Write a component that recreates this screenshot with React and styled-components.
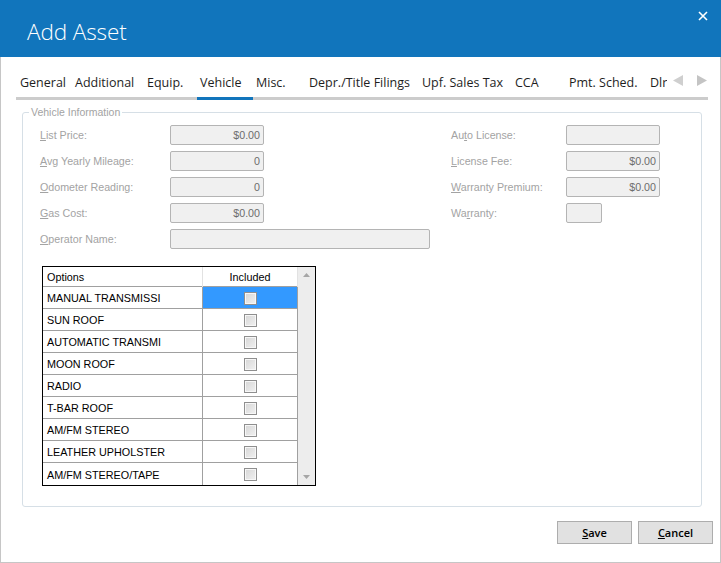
import React from 'react'
import styled, { createGlobalStyle } from 'styled-components'

const GlobalStyle = createGlobalStyle`
    html, body {
        margin: 0;
        padding: 0;
        background: #fff;
    }

    * {
        box-sizing: border-box;
    }
`

const tabs = [
    { label: 'General', width: 55 },
    { label: 'Additional', width: 72 },
    { label: 'Equip.', width: 53 },
    { label: 'Vehicle', width: 56, active: true },
    { label: 'Misc.', width: 53 },
    { label: 'Depr./Title Filings', width: 113 },
    { label: 'Upf. Sales Tax', width: 93 },
    { label: 'CCA', width: 54 },
    { label: 'Pmt. Sched.', width: 81 },
    { label: 'Dlr', width: 20 },
]

const options = [
    'MANUAL TRANSMISSI',
    'SUN ROOF',
    'AUTOMATIC TRANSMI',
    'MOON ROOF',
    'RADIO',
    'T-BAR ROOF',
    'AM/FM STEREO',
    'LEATHER UPHOLSTER',
    'AM/FM STEREO/TAPE',
]

// label text with the access key letter underlined
const Key = ({ text, at = 0 }) => (
    <>
        {text.slice(0, at)}
        <u>{text[at]}</u>
        {text.slice(at + 1)}
    </>
)

const AddAsset = () => {
    return (
        <Window>
            <Header>
                <Title>Add Asset</Title>
                <CloseButton aria-label="Close">
                    <svg width="10" height="10" viewBox="0 0 10 10">
                        <path d="M1 1 L9 9 M9 1 L1 9" stroke="#fff" strokeWidth="1.6" />
                    </svg>
                </CloseButton>
            </Header>

            <Body>
                <TabBar>
                    <TabList>
                        {tabs.map((tab) => (
                            <Tab key={tab.label} $width={tab.width} $active={tab.active}>
                                {tab.label}
                            </Tab>
                        ))}
                    </TabList>
                    <TabArrows>
                        <svg width="10" height="11" viewBox="0 0 10 11">
                            <path d="M10 0 L10 11 L0 5.5 Z" fill="#cfcfcf" />
                        </svg>
                        <svg width="10" height="11" viewBox="0 0 10 11">
                            <path d="M0 0 L0 11 L10 5.5 Z" fill="#c4c4c4" />
                        </svg>
                    </TabArrows>
                </TabBar>

                <Group>
                    <Legend>Vehicle Information</Legend>
                    <GroupBody>
                        <FieldColumns>
                            <FieldColumn $width={411}>
                                <FieldRow>
                                    <Label $width={130}><Key text="List Price:" /></Label>
                                    <Input $width={94}>$0.00</Input>
                                </FieldRow>
                                <FieldRow>
                                    <Label $width={130}><Key text="Avg Yearly Mileage:" /></Label>
                                    <Input $width={94}>0</Input>
                                </FieldRow>
                                <FieldRow>
                                    <Label $width={130}><Key text="Odometer Reading:" /></Label>
                                    <Input $width={94}>0</Input>
                                </FieldRow>
                                <FieldRow>
                                    <Label $width={130}><Key text="Gas Cost:" /></Label>
                                    <Input $width={94}>$0.00</Input>
                                </FieldRow>
                                <FieldRow>
                                    <Label $width={130}><Key text="Operator Name:" /></Label>
                                    <Input $width={260} />
                                </FieldRow>
                            </FieldColumn>
                            <FieldColumn>
                                <FieldRow>
                                    <Label $width={115}><Key text="Auto License:" at={2} /></Label>
                                    <Input $width={94} />
                                </FieldRow>
                                <FieldRow>
                                    <Label $width={115}><Key text="License Fee:" /></Label>
                                    <Input $width={94}>$0.00</Input>
                                </FieldRow>
                                <FieldRow>
                                    <Label $width={115}><Key text="Warranty Premium:" /></Label>
                                    <Input $width={94}>$0.00</Input>
                                </FieldRow>
                                <FieldRow>
                                    <Label $width={115}><Key text="Warranty:" at={2} /></Label>
                                    <Input $width={36} />
                                </FieldRow>
                            </FieldColumn>
                        </FieldColumns>

                        <OptionsGrid>
                            <GridTable>
                                <GridHeader>
                                    <HeaderCell>Options</HeaderCell>
                                    <HeaderCell $center>Included</HeaderCell>
                                </GridHeader>
                                {options.map((option, index) => (
                                    <GridRow key={option}>
                                        <Cell>{option}</Cell>
                                        <Cell $center $selected={index === 0}>
                                            <CheckBox />
                                        </Cell>
                                    </GridRow>
                                ))}
                            </GridTable>
                            <ScrollBar>
                                <svg width="7" height="4" viewBox="0 0 7 4">
                                    <path d="M0 4 L3.5 0 L7 4 Z" fill="#a6a6a6" />
                                </svg>
                                <svg width="7" height="4" viewBox="0 0 7 4">
                                    <path d="M0 0 L3.5 4 L7 0 Z" fill="#a6a6a6" />
                                </svg>
                            </ScrollBar>
                        </OptionsGrid>
                    </GroupBody>
                </Group>

                <Footer>
                    <Button><Key text="Save" /></Button>
                    <Button><Key text="Cancel" /></Button>
                </Footer>
            </Body>
        </Window>
    )
}

const App = () => (
    <>
        <GlobalStyle />
        <AddAsset />
    </>
)

export default App

const Window = styled.div`
    width: 721px;
    height: 563px;
    display: flex;
    flex-direction: column;
    background: #fff;
`

const Header = styled.div`
    height: 57px;
    flex-shrink: 0;
    display: flex;
    justify-content: space-between;
    align-items: flex-start;
    padding: 16px 13px 0 27px;
    background: #1175bc;
    color: #fff;
`

const Title = styled.h1`
    margin: 0;
    font-family: "Open Sans", sans-serif;
    font-weight: 300;
    font-size: 22.5px;
    line-height: 32px;
    letter-spacing: -0.1px;
`

const CloseButton = styled.button`
    margin-top: -5px;
    padding: 0;
    border: none;
    background: none;
    display: flex;
    cursor: pointer;
`

const Body = styled.div`
    flex: 1;
    display: flex;
    flex-direction: column;
    border: 1px solid #c6c6c6;
    border-top: none;
    min-height: 0;
`

const TabBar = styled.div`
    display: flex;
    margin: 15px 12px 0 15px;
    box-shadow: inset 0 -3px 0 #cccccc;
`

const TabList = styled.div`
    flex: 1;
    display: flex;
    overflow: hidden;
    padding-left: 1px;
`

const Tab = styled.div`
    flex-shrink: 0;
    width: ${(p) => p.$width}px;
    padding: 1px 0 0 3px;
    height: 28px;
    line-height: 20px;
    border-bottom: 3px solid ${(p) => (p.$active ? '#1175bc' : 'transparent')};
    font-family: "Open Sans", sans-serif;
    font-size: 12.5px;
    color: #1e1e1e;
    white-space: nowrap;
    cursor: pointer;
`

const TabArrows = styled.div`
    width: 41px;
    flex-shrink: 0;
    display: flex;
    align-items: flex-start;
    gap: 14px;
    padding: 3px 0 0 6px;
`

const Group = styled.fieldset`
    flex: 1;
    min-width: 0;
    margin: 6px 18px 0 21px;
    padding: 0;
    border: 1px solid #d6dfe6;
    border-radius: 3px;
`

const Legend = styled.legend`
    margin-left: 6px;
    padding: 0 2px;
    font-family: "Liberation Sans", Arial, sans-serif;
    font-size: 10.5px;
    line-height: 13px;
    color: #a3a3a3;
`

const GroupBody = styled.div`
    padding: 6px 0 0 17px;
`

const FieldColumns = styled.div`
    display: flex;
`

const FieldColumn = styled.div`
    width: ${(p) => (p.$width ? `${p.$width}px` : 'auto')};
    display: flex;
    flex-direction: column;
    gap: 6px;
`

const FieldRow = styled.div`
    display: flex;
    align-items: center;
    height: 20px;
`

const Label = styled.label`
    width: ${(p) => p.$width}px;
    flex-shrink: 0;
    font-family: "Liberation Sans", Arial, sans-serif;
    font-size: 10.7px;
    color: #a3a3a3;
    white-space: nowrap;
`

const Input = styled.div`
    width: ${(p) => p.$width}px;
    height: 20px;
    padding: 0 3px;
    border: 1px solid #b4b4b4;
    border-radius: 2px;
    background: #f0f0f0;
    font-family: "Liberation Sans", Arial, sans-serif;
    font-size: 10.7px;
    line-height: 18px;
    text-align: right;
    color: #6d6d6d;
`

const OptionsGrid = styled.div`
    display: flex;
    width: 274px;
    margin: 17px 0 0 2px;
    border: 1px solid #000;
`

const GridTable = styled.div`
    width: 255px;
`

const GridHeader = styled.div`
    display: grid;
    grid-template-columns: 160px 95px;
    height: 20px;
    border-bottom: 1px solid #a0a0a0;
    background: #fff;
`

const HeaderCell = styled.div`
    padding-left: ${(p) => (p.$center ? 0 : '4px')};
    text-align: ${(p) => (p.$center ? 'center' : 'left')};
    border-right: 1px solid #e2e2e2;
    font-family: "Liberation Sans", Arial, sans-serif;
    font-size: 10.8px;
    line-height: 20px;
    color: #000;
`

const GridRow = styled.div`
    display: grid;
    grid-template-columns: 160px 95px;
    height: 22px;
    border-bottom: 1px solid #a0a0a0;

    &:last-child {
        border-bottom: none;
    }
`

const Cell = styled.div`
    display: flex;
    align-items: center;
    justify-content: ${(p) => (p.$center ? 'center' : 'flex-start')};
    padding: 1px 0 0 ${(p) => (p.$center ? 0 : '4px')};
    border-right: 1px solid #a0a0a0;
    background: ${(p) => (p.$selected ? '#3399ff' : '#fff')};
    font-family: "Liberation Sans", Arial, sans-serif;
    font-size: 10.8px;
    color: #000;
    white-space: nowrap;
    overflow: hidden;
`

const CheckBox = styled.span`
    width: 13px;
    height: 13px;
    border: 1px solid #8f8f8f;
    background: linear-gradient(135deg, #d6d6d6, #f1f1f1);
    box-shadow: inset 0 0 0 1px #f7f7f7;
`

const ScrollBar = styled.div`
    flex: 1;
    display: flex;
    flex-direction: column;
    justify-content: space-between;
    align-items: center;
    padding: 6px 0 6px;
    background: #ededed;
`

const Footer = styled.div`
    display: flex;
    justify-content: flex-end;
    gap: 6px;
    padding: 14px 7px 18px 0;
`

const Button = styled.button`
    width: 75px;
    height: 23px;
    padding: 0;
    border: 1px solid #adadad;
    background: #e1e1e1;
    font-family: "Open Sans", sans-serif;
    font-weight: 600;
    font-size: 11px;
    color: #000;
    cursor: pointer;
`
